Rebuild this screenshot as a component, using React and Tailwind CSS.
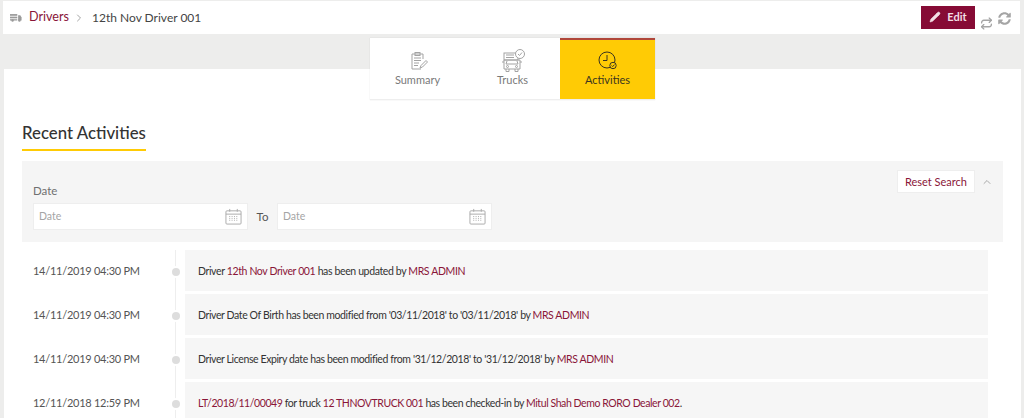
import React from "react";
import { ChevronRight, ChevronUp, Pencil, Repeat } from "lucide-react";
import { FaSyncAlt } from "react-icons/fa";

const M = ({ children }) => <span className="text-[#8a1538]">{children}</span>;

function Cal() {
  return (
    <svg width="17" height="17" viewBox="0 0 18 18" fill="none" stroke="#a9a9a9" strokeWidth="1">
      <rect x="1" y="3" width="16" height="14" rx="1" />
      <path d="M1 6.5h16" />
      <path d="M5 1v3M13 1v3" />
      <path d="M4.5 9h1M7 9h1M9.5 9h1M12 9h1M4.5 11h1M7 11h1M9.5 11h1M12 11h1M4.5 13h1M7 13h1M9.5 13h1M12 13h1" />
    </svg>
  );
}

function Field() {
  return (
    <div className="w-[215px] h-[27px] bg-white border border-[#eeeeee] flex items-center justify-between pl-[5px] pr-[5px] text-[10.5px] text-[#a5a5a5]">
      <span className="mt-[1px]">Date</span>
      <Cal />
    </div>
  );
}

function Row({ date, track, children }) {
  return (
    <div className="flex h-[44px]">
      <div className="w-[142px] pl-[11px] pt-[12px] text-[11px] tracking-[-0.26px] leading-[18px] text-[#555555]">{date}</div>
      <div className="w-[21px] relative">
        <div className="absolute left-[11px] top-0 bottom-0 w-px bg-[#eeeeee]"></div>
        <div className="absolute left-[6px] top-[16px] w-[12px] h-[12px] rounded-full bg-[#dddddd] border-2 border-white"></div>
      </div>
      <div className={"w-[803px] h-[41px] bg-[#f6f6f6] pl-[13px] pt-[2px] flex items-center text-[10.5px] text-[#333333] " + track}>
        <span>{children}</span>
      </div>
    </div>
  );
}

function SummaryIcon() {
  return (
    <svg width="20" height="20" viewBox="0 0 20 20" fill="none" stroke="#a3a3a3" strokeWidth="1">
      <path d="M15 8V3H4v15h9" />
      <rect x="7" y="1.5" width="5" height="3" />
      <path d="M6 7h7M6 9.5h7M6 12h5M6 14.5h4" />
      <path d="M12 17l1-2.5 5-5 1.5 1.5-5 5z" />
    </svg>
  );
}

function TruckIcon() {
  return (
    <svg width="26" height="24" viewBox="0 0 26 24" fill="none" stroke="#a3a3a3" strokeWidth="1">
      <rect x="4" y="4" width="14" height="7" />
      <path d="M6 6h8M6 8.5h8" />
      <path d="M4 11h16v9H4zM2 13h2M20 13h2" />
      <path d="M7 12l-1 3h12l-1-3" />
      <circle cx="7.5" cy="17.5" r="1" />
      <circle cx="16.5" cy="17.5" r="1" />
      <path d="M6 20v2.5h3V20M15 20v2.5h3V20" />
      <circle cx="20" cy="5" r="4.5" fill="#fff" />
      <path d="M18 5l1.5 1.5L22 3.5" />
    </svg>
  );
}

function ClockIcon() {
  return (
    <svg width="20" height="20" viewBox="0 0 20 20" fill="none" stroke="#3a3420" strokeWidth="1">
      <circle cx="9" cy="9" r="8" />
      <path d="M9 4v5.5H5" />
      <circle cx="15" cy="14.5" r="3.2" fill="#ffcb05" />
      <path d="M13.6 14.5l1.1 1.1 1.8-2" />
    </svg>
  );
}

function Tab({ label, icon, active }) {
  return (
    <div className={active
      ? "w-[95px] h-full bg-[#ffcb05] border-t-2 border-[#b0473a] flex flex-col items-center pt-[8px] text-[#3b3520]"
      : "w-[95px] h-full pt-[10px] flex flex-col items-center text-[#7a7a7a]"}>
      <div className="h-[25px] flex items-center justify-center">{icon}</div>
      <div className="mt-[-2px] text-[11px] leading-[18px]">{label}</div>
    </div>
  );
}

export default function App() {
  return (
    <div className="w-[1024px] h-[418px] overflow-hidden bg-[#ededec] font-['Lato','Liberation_Sans',sans-serif]">
      <div className="pt-px pl-[3px] pr-[4px]">
        <div className="h-[33px] bg-white flex items-center pl-[7px] pr-[2px]">
          <svg width="12" height="9" viewBox="0 0 14 10" fill="#9a9a9a" className="mr-[7px]">
            <rect x="0" y="1" width="8.5" height="2" />
            <rect x="0" y="4" width="8.5" height="2" />
            <rect x="0" y="7" width="8.5" height="1.5" />
            <path d="M9.5 2.5H12l1.5 2.5v3.5h-4z" />
            <circle cx="3" cy="8.5" r="1.4" />
            <circle cx="11" cy="8.5" r="1.4" />
          </svg>
          <span className="text-[12.6px] text-[#8a1538]">Drivers</span>
          <ChevronRight size={12} strokeWidth={2} className="text-[#a5a5a5] ml-[4px] mr-[7px]" />
          <span className="text-[12px] text-[#444444]">12th Nov Driver 001</span>
          <div className="ml-auto flex items-start">
            <div className="w-[54px] h-[23px] bg-[#860b35] text-[#f3dfe5] text-[11px] font-bold flex items-center justify-center gap-[6px]">
              <Pencil size={12} fill="currentColor" strokeWidth={1} />
              <span>Edit</span>
            </div>
            <Repeat size={13} strokeWidth={2.4} className="text-[#a5a5a5] ml-[5px] mt-[11px]" />
            <FaSyncAlt size={13} className="text-[#a5a5a5] ml-[5px] mt-[6px] mr-[7px]" />
          </div>
        </div>
      </div>
      <div className="mt-[35px] ml-[4px] mr-[3px] h-[349px] bg-white relative">
        <div className="absolute left-[366px] top-[-31px] w-[285px] h-[62px] bg-white border-b border-[#eeeeee] shadow-[0_0_1px_rgba(0,0,0,0.15)] flex">
          <Tab label="Summary" icon={<SummaryIcon />} />
          <Tab label="Trucks" icon={<TruckIcon />} />
          <Tab label="Activities" icon={<ClockIcon />} active />
        </div>
        <div className="pt-[53px] pl-[18px] flex">
          <div className="border-b-2 border-[#ffcb05] text-[#333333] text-[16.8px] font-medium leading-[22px] pb-[5px]">
            Recent Activities
          </div>
        </div>
        <div className="mt-[10px] ml-[18px] w-[981px] h-[81px] bg-[#f5f5f5] flex justify-between pl-[11px] pr-[10px]">
          <div className="pt-[22px]">
            <div className="text-[11.5px] leading-[15px] text-[#707070] mb-[5px]">Date</div>
            <div className="flex items-center">
              <Field />
              <span className="w-[29px] text-center text-[11.5px] text-[#555555]">To</span>
              <Field />
            </div>
          </div>
          <div className="pt-[9px] flex items-start">
            <div className="w-[78px] h-[23px] bg-white border border-[#eeeeee] pt-px flex items-center justify-center text-[11px] text-[#8a1538]">
              Reset Search
            </div>
            <ChevronUp size={12} strokeWidth={2} className="text-[#aaaaaa] ml-[6px] mt-[6px]" />
          </div>
        </div>
        <div className="mt-[8px] ml-[18px]">
          <Row track="tracking-[-0.37px]" date="14/11/2019 04:30 PM">Driver <M>12th Nov Driver 001</M> has been updated by <M>MRS ADMIN</M></Row>
          <Row track="tracking-[-0.39px]" date="14/11/2019 04:30 PM">Driver Date Of Birth has been modified from '03/11/2018' to '03/11/2018' by <M>MRS ADMIN</M></Row>
          <Row track="tracking-[-0.39px]" date="14/11/2019 04:30 PM">Driver License Expiry date has been modified from '31/12/2018' to '31/12/2018' by <M>MRS ADMIN</M></Row>
          <Row track="tracking-[-0.42px]" date="12/11/2018 12:59 PM"><M>LT/2018/11/00049</M> for truck <M>12 THNOVTRUCK 001</M> has been checked-in by <M>Mitul Shah Demo RORO Dealer 002</M>.</Row>
        </div>
      </div>
    </div>
  );
}
